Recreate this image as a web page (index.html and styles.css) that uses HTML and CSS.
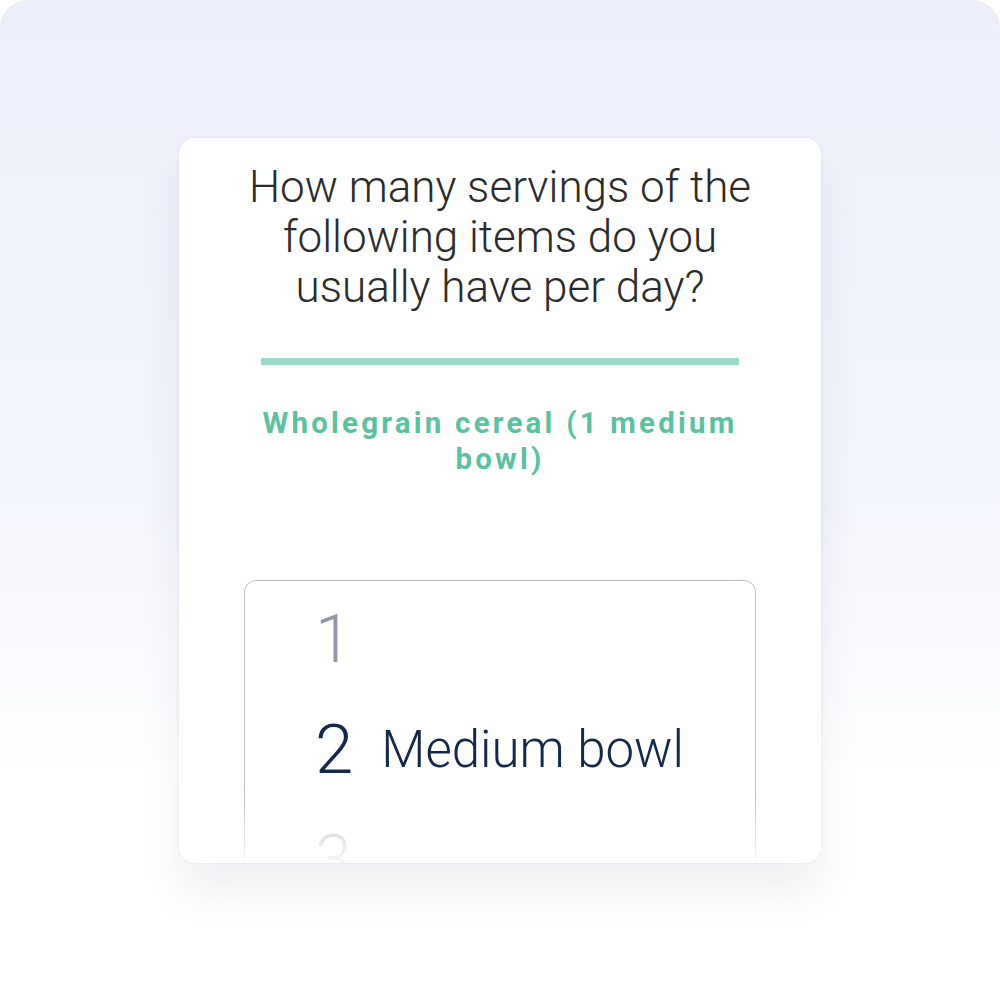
FILE: index.html
```html
<!DOCTYPE html>
<html lang="en">

<head>
  <meta charset="UTF-8" />
  <meta name="viewport" content="width=device-width, initial-scale=1.0" />
  <title>Servings</title>
  <link rel="stylesheet" href="styles.css">
</head>

<body>
  <div class="frame">
    <div class="card">
      <h1 class="question">How many servings of the following items do you usually have per day?</h1>
      <div class="divider"></div>
      <h2 class="item-name">Wholegrain cereal (1 medium bowl)</h2>

      <div class="picker">
        <div class="picker-row">
          <span class="num">1</span>
        </div>
        <div class="picker-row selected">
          <span class="num">2</span>
          <span class="label">Medium bowl</span>
        </div>
        <div class="picker-row faded">
          <span class="num">3</span>
        </div>
      </div>
    </div>
  </div>
</body>

</html>
```

FILE: styles.css
```css
body {
  margin: 0;
  background-color: #fff;
  font-family: Roboto, 'Noto Sans', sans-serif;
}

.frame {
  width: 1000px;
  height: 1000px;
  border-radius: 28px;
  background: linear-gradient(180deg, #eceffa 0%, #f3f5fc 50%, #ffffff 78%);
  display: flex;
  justify-content: center;
  align-items: center;
  overflow: hidden;
}

.card {
  width: 642px;
  height: 725px;
  box-sizing: border-box;
  padding-top: 24px;
  background-color: #fff;
  border-radius: 16px;
  box-shadow: 0 0 2px rgba(40, 50, 90, 0.08), 0 30px 44px rgba(40, 50, 90, 0.08);
  overflow: hidden;
}

.question {
  margin: 0 auto;
  width: 540px;
  font-size: 44px;
  font-weight: 300;
  line-height: 50px;
  color: #2b2b2b;
  text-align: center;
}

.divider {
  width: 478px;
  height: 7px;
  margin: 46px auto 0;
  background-color: #99dccb;
}

.item-name {
  margin: 40px auto 0;
  width: 500px;
  font-size: 29.5px;
  font-weight: 700;
  line-height: 36px;
  letter-spacing: 3.2px;
  color: #5cc19f;
  text-align: center;
}

.picker {
  margin: 103px auto 0;
  width: 512px;
  height: 300px;
  box-sizing: border-box;
  border: 1.5px solid #b9bdc7;
  border-bottom: none;
  border-radius: 12px 12px 0 0;
  padding: 4px 0 0 70px;
  -webkit-mask-image: linear-gradient(180deg, #000 70%, rgba(0, 0, 0, 0.15) 92%);
  mask-image: linear-gradient(180deg, #000 70%, rgba(0, 0, 0, 0.15) 92%);
}

.picker-row {
  height: 110px;
  display: flex;
  align-items: center;
  gap: 28px;
  color: #8f99a9;
  font-weight: 300;
}

.picker-row .num {
  font-size: 66px;
}

.picker-row.selected {
  color: #14284a;
}

.picker-row.selected .num {
  font-size: 69px;
}

.picker-row .label {
  font-size: 51px;
}

.picker-row.faded {
  color: #b3b9c4;
}
```
